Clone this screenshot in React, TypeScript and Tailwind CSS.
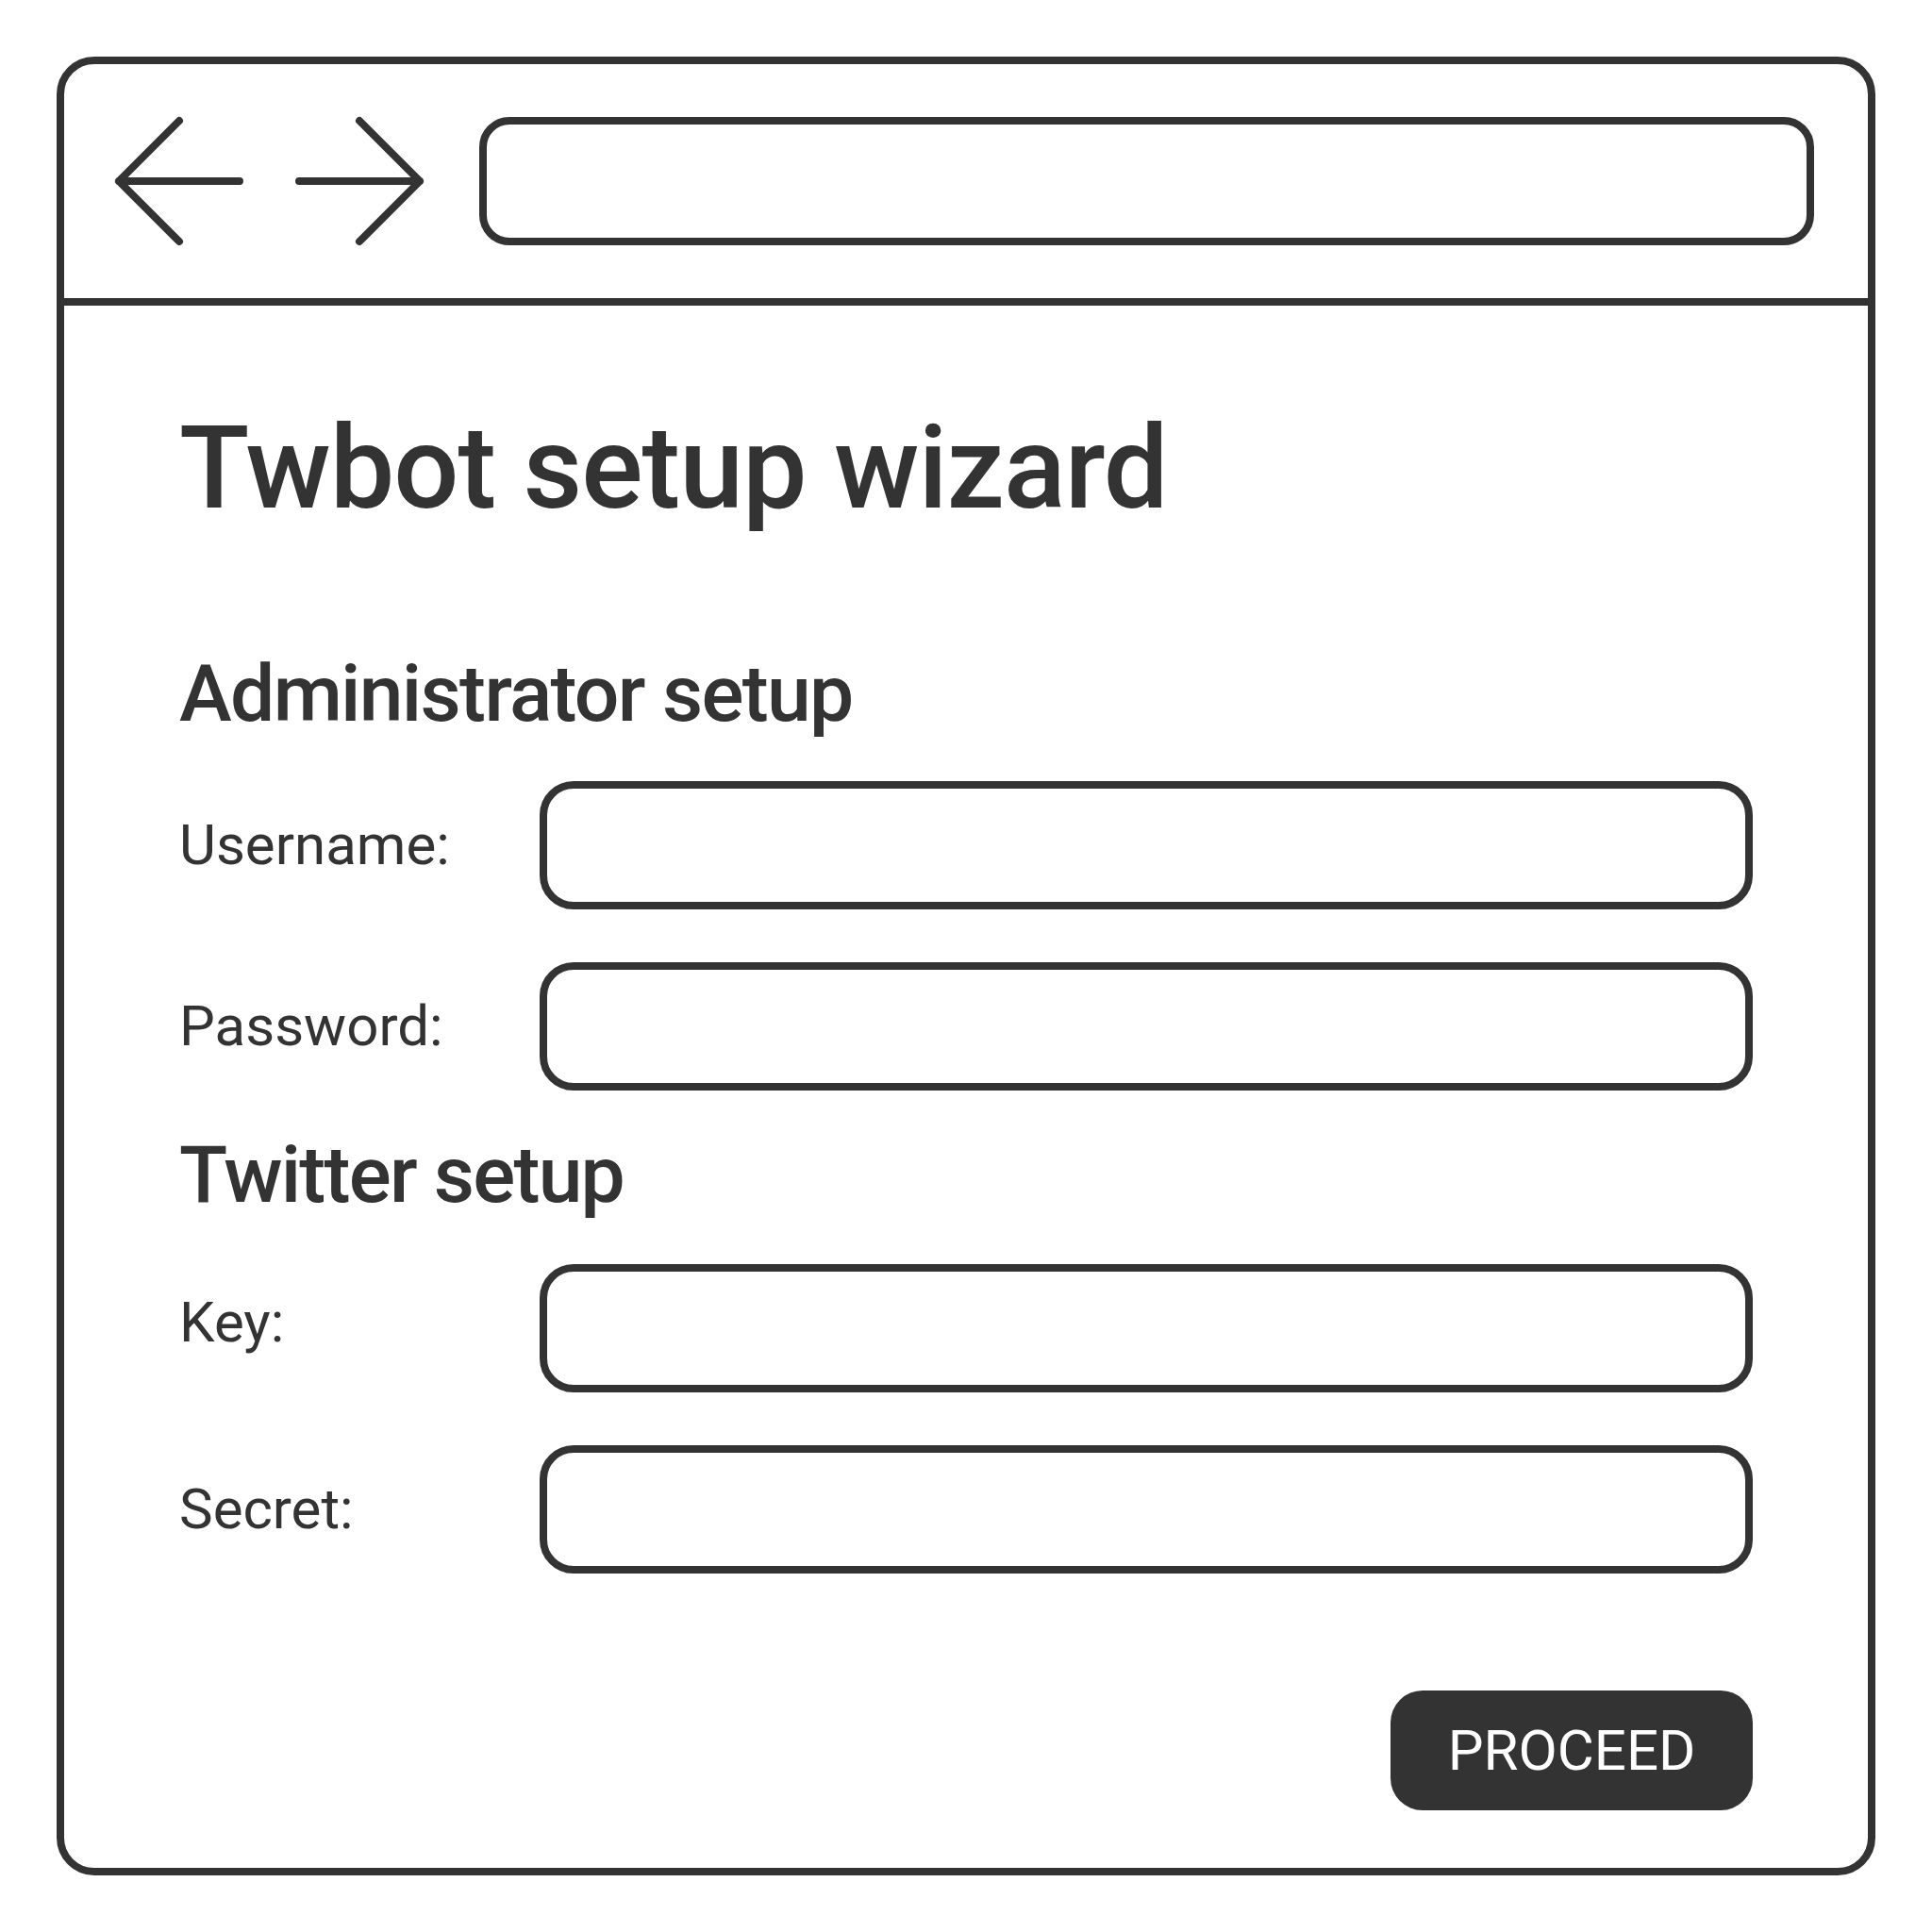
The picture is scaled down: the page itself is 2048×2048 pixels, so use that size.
import React from 'react';

const ink = '#333333';

const BackArrow = () => (
  <svg viewBox="0 0 144 144" className="w-[144px] h-[144px] shrink-0" fill="none" stroke={ink} strokeWidth={8} strokeLinecap="round" strokeLinejoin="round">
    <path d="M72 8 L8 72 L72 136 M8 72 H136" />
  </svg>
);

const ForwardArrow = () => (
  <svg viewBox="0 0 144 144" className="w-[144px] h-[144px] shrink-0" fill="none" stroke={ink} strokeWidth={8} strokeLinecap="round" strokeLinejoin="round">
    <path d="M72 8 L136 72 L72 136 M136 72 H8" />
  </svg>
);

const Field = ({ label, nudge }: { label: string; nudge?: boolean }) => (
  <div className="flex items-center">
    <label className={`w-[382px] shrink-0 text-[60px] leading-none text-[#333] ${nudge ? 'mb-[12px]' : ''}`}>{label}</label>
    <input
      type="text"
      className="flex-1 h-[136px] border-[8px] border-[#333] rounded-[36px] bg-transparent outline-none px-6 text-[48px]"
    />
  </div>
);

export default function App() {
  return (
    <div className="w-[2048px] h-[2048px] bg-white p-[60px] font-['Roboto',sans-serif] text-[#333]">
      <div className="h-full border-[8px] border-[#333] rounded-[40px] flex flex-col">
        {/* browser chrome */}
        <div className="h-[256px] shrink-0 border-b-[8px] border-[#333] flex items-center pl-[50px] pr-[57px]">
          <BackArrow />
          <div className="ml-[47px]">
            <ForwardArrow />
          </div>
          <div className="ml-[55px] flex-1 h-[136px] border-[8px] border-[#333] rounded-[32px]" />
        </div>

        {/* wizard */}
        <div className="pt-[112px] px-[122px] flex flex-col">
          <h1 className="text-[122px] leading-[122px] font-medium tracking-[-1px]">Twbot setup wizard</h1>

          <h2 className="mt-[136px] text-[84px] leading-[84px] font-medium tracking-[-1.7px]">Administrator setup</h2>
          <div className="mt-[50px] flex flex-col gap-[56px]">
            <Field label="Username:" />
            <Field label="Password:" />
          </div>

          <h2 className="mt-[48px] text-[84px] leading-[84px] font-medium tracking-[-1.8px]">Twitter setup</h2>
          <div className="mt-[52px] flex flex-col gap-[56px]">
            <Field label="Key:" nudge />
            <Field label="Secret:" />
          </div>

          <div className="mt-[124px] flex justify-end">
            <button className="w-[384px] h-[127px] rounded-[34px] bg-[#333] text-white text-[60px] leading-none">
              PROCEED
            </button>
          </div>
        </div>
      </div>
    </div>
  );
}
